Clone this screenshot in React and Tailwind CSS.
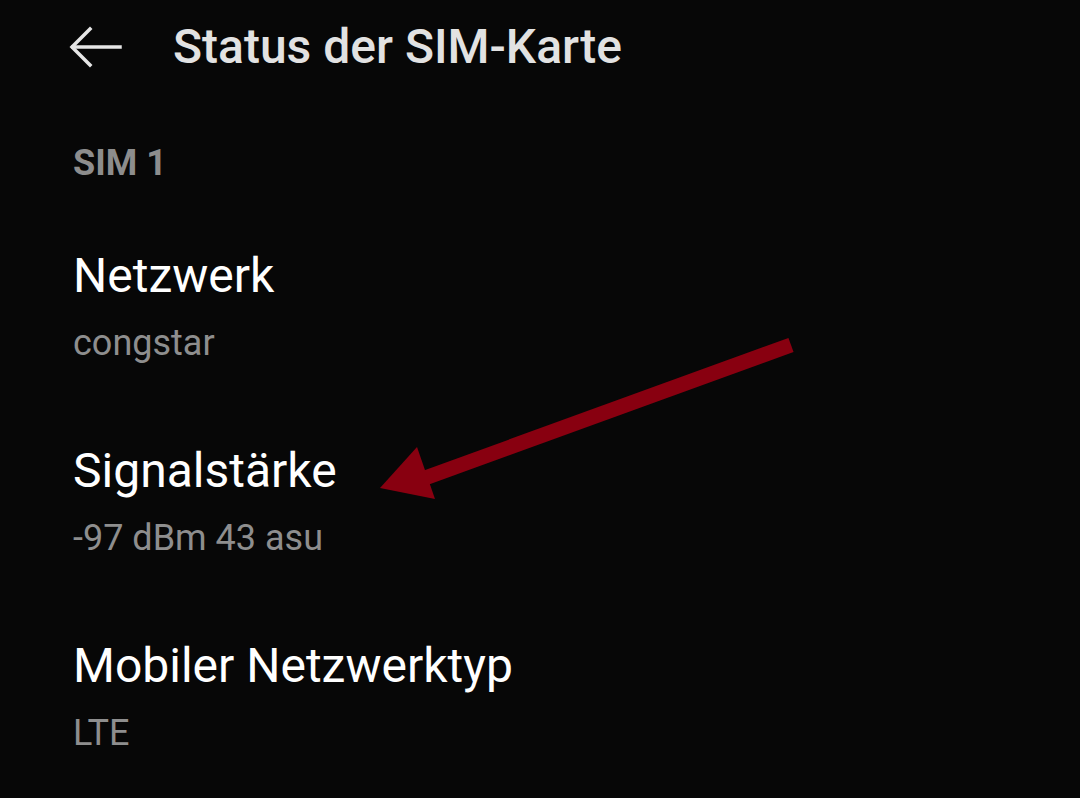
import React from 'react';

const items = [
  { title: 'Netzwerk', value: 'congstar' },
  { title: 'Signalstärke', value: '-97 dBm 43 asu' },
  { title: 'Mobiler Netzwerktyp', value: 'LTE' },
];

const BackArrow = () => (
  <svg width="56" height="44" viewBox="0 0 56 44" fill="none" stroke="#e6e6e6" strokeWidth="3.5" strokeLinecap="square">
    <path d="M52 22H5" />
    <path d="M22 4L4 22l18 18" />
  </svg>
);

const RedArrow = () => (
  <svg className="absolute left-0 top-0 pointer-events-none" width="1080" height="798" viewBox="0 0 1080 798">
    <path d="M791 345L425 478" stroke="#880010" strokeWidth="15" />
    <path d="M380 488L417 447L435 499Z" fill="#880010" />
  </svg>
);

export default function App() {
  return (
    <div className="relative w-[1080px] h-[798px] overflow-hidden bg-[#070707] font-['Roboto',sans-serif]">
      <header className="flex items-start pt-[22px] pl-[68px]">
        <div className="mt-[3px]">
          <BackArrow />
        </div>
        <h1 className="ml-[49px] text-[48px] leading-[49px] font-medium text-[#e2e2e2]">Status der SIM-Karte</h1>
      </header>

      <div className="pl-[73px]">
        <div className="mt-[75px] text-[36px] leading-[34px] font-bold text-[#8d8d8d]">SIM 1</div>

        {items.map((item, i) => (
          <div key={item.title} className={i === 0 ? 'mt-[73px]' : 'mt-[87px]'}>
            <div className="text-[48px] leading-[46px] text-white">{item.title}</div>
            <div className="mt-[26px] text-[36px] leading-[36px] text-[#8e8e8e]">{item.value}</div>
          </div>
        ))}
      </div>

      <RedArrow />
    </div>
  );
}
